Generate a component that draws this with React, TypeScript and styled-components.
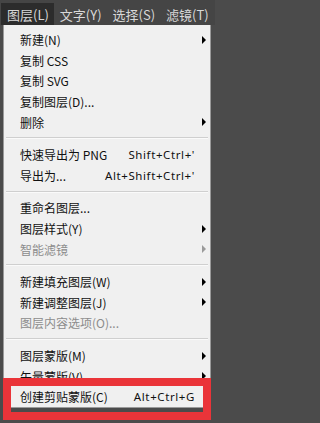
import styled, { createGlobalStyle } from "styled-components";

const GlobalStyle = createGlobalStyle`
  html, body {
    margin: 0;
    padding: 0;
    background: #4b4b4b;
  }
`;

type Item =
  | { kind: "sep" }
  | {
      kind: "item";
      label: string;
      shortcut?: string;
      sub?: boolean;
      disabled?: boolean;
    };

const items: Item[] = [
  { kind: "item", label: "新建(N)", sub: true },
  { kind: "item", label: "复制 CSS" },
  { kind: "item", label: "复制 SVG" },
  { kind: "item", label: "复制图层(D)..." },
  { kind: "item", label: "删除", sub: true },
  { kind: "sep" },
  { kind: "item", label: "快速导出为 PNG", shortcut: "Shift+Ctrl+'" },
  { kind: "item", label: "导出为...", shortcut: "Alt+Shift+Ctrl+'" },
  { kind: "sep" },
  { kind: "item", label: "重命名图层..." },
  { kind: "item", label: "图层样式(Y)", sub: true },
  { kind: "item", label: "智能滤镜", sub: true, disabled: true },
  { kind: "sep" },
  { kind: "item", label: "新建填充图层(W)", sub: true },
  { kind: "item", label: "新建调整图层(J)", sub: true },
  { kind: "item", label: "图层内容选项(O)...", disabled: true },
  { kind: "sep" },
  { kind: "item", label: "图层蒙版(M)", sub: true },
  { kind: "item", label: "矢量蒙版(V)", sub: true },
  { kind: "item", label: "创建剪贴蒙版(C)", shortcut: "Alt+Ctrl+G" },
];

const topMenus = ["图层(L)", "文字(Y)", "选择(S)", "滤镜(T)"];

export default function App() {
  return (
    <>
      <GlobalStyle />
      <Screen>
        <MenuBar>
          {topMenus.map((m, i) => (
            <TopItem key={m} $active={i === 0}>
              {m}
            </TopItem>
          ))}
        </MenuBar>
        <Dropdown>
          {items.map((it, i) =>
            it.kind === "sep" ? (
              <Separator key={i} />
            ) : (
              <Row key={i} $disabled={it.disabled}>
                <Label>{it.label}</Label>
                {it.shortcut && <Shortcut>{it.shortcut}</Shortcut>}
                {it.sub && <Arrow $disabled={it.disabled} />}
              </Row>
            )
          )}
        </Dropdown>
        <Highlight />
      </Screen>
    </>
  );
}

const Screen = styled.div`
  position: relative;
  width: 215px;
  height: 423px;
  overflow: hidden;
  background: #4b4b4b;
  font-family: "Noto Sans CJK SC", "Noto Sans", sans-serif;
`;

const MenuBar = styled.div`
  height: 25px;
  display: flex;
  align-items: flex-end;
  padding-left: 1px;
  background: #454545;
`;

const TopItem = styled.div<{ $active?: boolean }>`
  height: 22px;
  display: flex;
  align-items: center;
  padding: 0 5px 0 6px;
  font-size: 13px;
  color: #d8d8d8;
  background: ${(p) => (p.$active ? "#2c2c2c" : "transparent")};
  white-space: nowrap;
`;

const Dropdown = styled.div`
  width: 206px;
  margin-left: 3px;
  padding-top: 4.5px;
  background: #f0f0f0;
  border: 1px solid #9a9a9a;
  border-top: none;
`;

const Row = styled.div<{ $disabled?: boolean }>`
  position: relative;
  height: 20.6px;
  display: flex;
  align-items: center;
  padding: 0 16px 0 16px;
  font-size: 12px;
  color: ${(p) => (p.$disabled ? "#8c8c8c" : "#111111")};
  white-space: nowrap;
`;

const Label = styled.span`
  flex: 1;
`;

const Shortcut = styled.span`
  font-family: "Noto Sans", "Noto Sans CJK SC", sans-serif;
  font-size: 11.5px;
  letter-spacing: 0.6px;
  margin-right: -1px;
`;

const Arrow = styled.span<{ $disabled?: boolean }>`
  position: absolute;
  right: 4px;
  top: 50%;
  margin-top: -4px;
  width: 0;
  height: 0;
  border-top: 4px solid transparent;
  border-bottom: 4px solid transparent;
  border-left: 4px solid ${(p) => (p.$disabled ? "#9a9a9a" : "#000000")};
`;

const Separator = styled.div`
  height: 1px;
  margin: 5px 2px 5px 2px;
  background: #cfcfcf;
  border-bottom: 1px solid #fafafa;
`;

const Highlight = styled.div`
  position: absolute;
  left: 3px;
  top: 378px;
  width: 192px;
  height: 26px;
  border: 8px solid #ea3439;
  background: transparent;
  pointer-events: none;
`;
